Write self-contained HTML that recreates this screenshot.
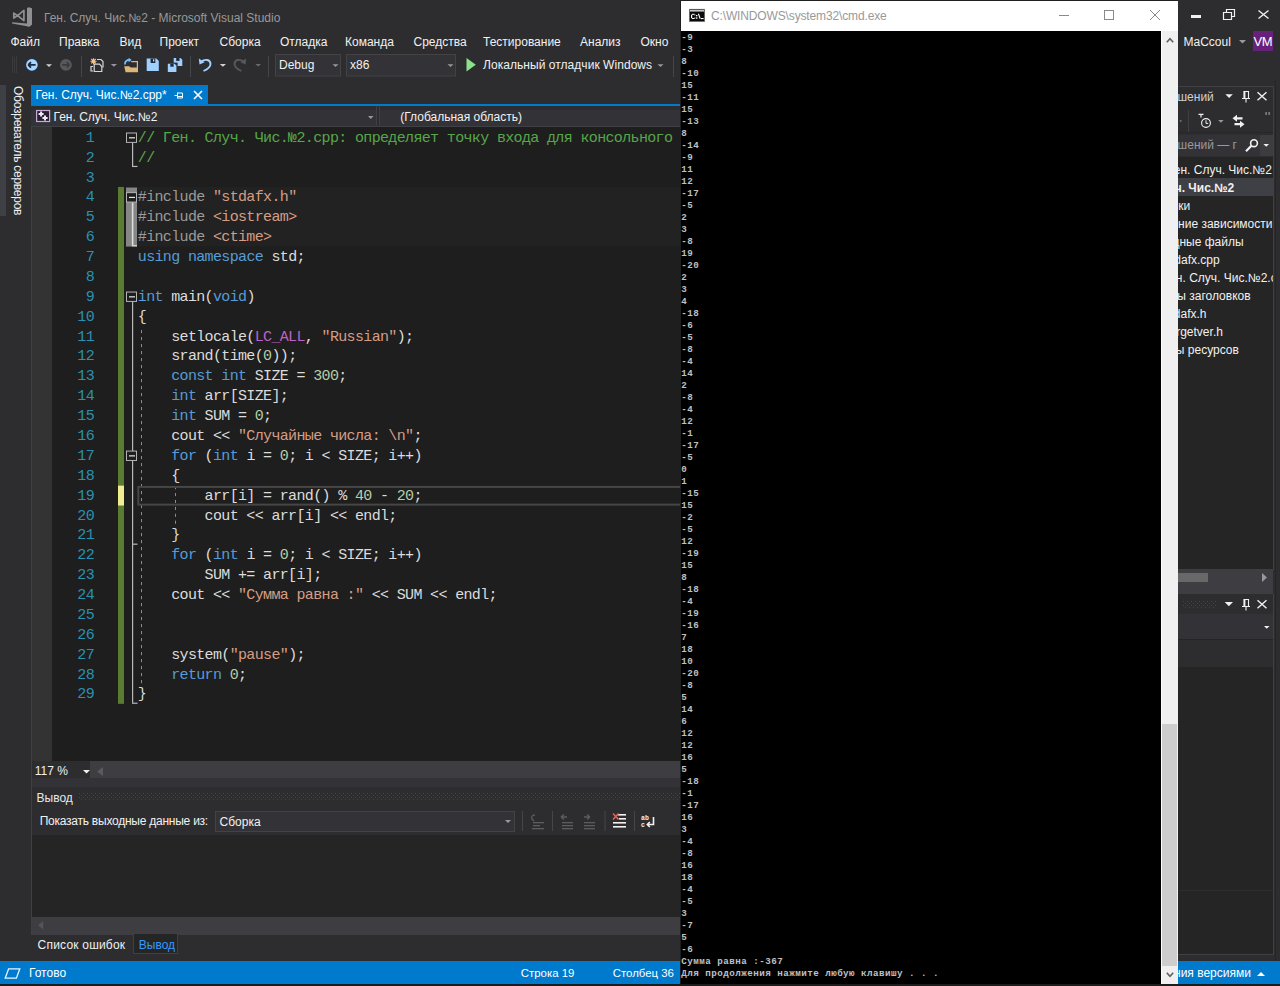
<!DOCTYPE html>
<html><head><meta charset="utf-8">
<style>
*{margin:0;padding:0;box-sizing:border-box}
html,body{width:1280px;height:986px;overflow:hidden;background:#2d2d30;font-family:"Liberation Sans",sans-serif;font-size:12px;color:#f1f1f1}
.a{position:absolute}
.t{position:absolute;white-space:pre;line-height:14px}
.mono{font-family:"Liberation Mono",monospace}
#code .ln{position:absolute;left:60px;width:34px;text-align:right;color:#2b91af}
#code .cl{position:absolute;left:137.8px;color:#dcdcdc;white-space:pre}
.cm{color:#57a64a}.pp{color:#9b9b9b}.st{color:#d69d85}.kw{color:#569cd6}.nu{color:#b5cea8}.mc{color:#bd63c5}
#cons div{height:12px;line-height:12px;white-space:pre}
svg{position:absolute;overflow:visible}
</style></head><body>
<svg style="left:0;top:0" width="40" height="30" viewBox="0 0 40 30">
<path d="M27 8 L28.8 7.2 L32 8.3 V24.6 L29.6 26.6 L27 26.2 Z" fill="#8f8f94"/>
<path d="M12 22.2 L27 23.4 L32 24.4 L29.6 26.6 L27 26.3 L12 23.4 Z" fill="#8f8f94"/>
<path d="M13.8 13.2 L17.6 15.6 L13.8 18.1 Z M23.9 10.4 V20.6 L17.6 15.6 Z" fill="none" stroke="#8f8f94" stroke-width="1.7" stroke-linejoin="round"/>
</svg>
<div class="t" style="left:44px;top:11px;color:#999999;">Ген. Случ. Чис.№2 - Microsoft Visual Studio</div>
<div class="a" style="left:1190.5px;top:15px;width:10px;height:3px;background:#f1f1f1;"></div>
<svg style="left:1223px;top:9px" width="12" height="11"><path d="M3.5 3.5 V0.5 H11.5 V7.5 H8.5 M0.5 3.5 H8.5 V10.5 H0.5 Z" fill="none" stroke="#f1f1f1" stroke-width="1.2"/></svg>
<svg style="left:1258px;top:9.5px" width="11" height="9"><path d="M0.5 0.5 L10.5 8.5 M10.5 0.5 L0.5 8.5" stroke="#f1f1f1" stroke-width="1.4"/></svg>
<div class="t" style="left:10.5px;top:34.6px;color:#f1f1f1;">Файл</div>
<div class="t" style="left:59px;top:34.6px;color:#f1f1f1;">Правка</div>
<div class="t" style="left:119.5px;top:34.6px;color:#f1f1f1;">Вид</div>
<div class="t" style="left:159.5px;top:34.6px;color:#f1f1f1;">Проект</div>
<div class="t" style="left:219.5px;top:34.6px;color:#f1f1f1;">Сборка</div>
<div class="t" style="left:280px;top:34.6px;color:#f1f1f1;">Отладка</div>
<div class="t" style="left:345px;top:34.6px;color:#f1f1f1;">Команда</div>
<div class="t" style="left:413.5px;top:34.6px;color:#f1f1f1;">Средства</div>
<div class="t" style="left:483px;top:34.6px;color:#f1f1f1;">Тестирование</div>
<div class="t" style="left:580px;top:34.6px;color:#f1f1f1;">Анализ</div>
<div class="t" style="left:640.5px;top:34.6px;color:#f1f1f1;">Окно</div>
<div class="t" style="left:1183.5px;top:35px;color:#f1f1f1;">MaCcoul</div>
<svg style="left:1239px;top:40px" width="7" height="4"><path d="M0 0H7L3.5 3.5Z" fill="#999"/></svg>
<div class="a" style="left:1252.5px;top:31px;width:20.5px;height:20px;background:#68217a;"></div>
<div class="t" style="left:1253.5px;top:35px;color:#ffffff;font-size:13px;letter-spacing:-0.3px">VM</div>
<svg style="left:0;top:52px" width="680" height="28" viewBox="0 52 680 28">
<!-- gripper -->
<g fill="#3a3a3e"><rect x="12" y="56" width="1" height="17"/><rect x="14" y="57" width="1" height="16"/><rect x="16" y="56" width="1" height="17"/></g>
<!-- back -->
<circle cx="31.9" cy="64.9" r="6.6" fill="#1a3350"/>
<circle cx="31.9" cy="64.9" r="5.8" fill="#a9d5ff"/>
<path d="M28.2 64.9 H35.6 M28.2 64.9 L31 62.1 M28.2 64.9 L31 67.7" stroke="#1b2a3e" stroke-width="1.8" fill="none"/>
<path d="M46 64.3 H52 L49 67 Z" fill="#d2d2d2"/>
<!-- forward -->
<circle cx="65.9" cy="64.9" r="5.9" fill="#58585c"/>
<path d="M69.4 64.9 H62.2 M69.4 64.9 L66.8 62.3 M69.4 64.9 L66.8 67.5" stroke="#3a3a3e" stroke-width="1.6" fill="none"/>
<rect x="81" y="56" width="1" height="21" fill="#46464a"/>
<!-- new project -->
<g stroke="#f2c48a" stroke-width="1.1"><path d="M90.5 61.2 H96.5 M93.5 58.2 V64.2 M91.3 59 L95.7 63.4 M95.7 59 L91.3 63.4"/></g>
<circle cx="93.5" cy="61.2" r="1.3" fill="#f2c48a"/>
<path d="M97 59.5 H101 L103 61.5 V67.5" fill="none" stroke="#d6d6d6" stroke-width="1.2"/>
<path d="M94.2 64.2 H99.5 L101.8 66.5 V71.5 H94.2 Z" fill="#2d2d30" stroke="#d6d6d6" stroke-width="1.2"/>
<path d="M93 66.5 H91 V71 H93" fill="none" stroke="#d6d6d6" stroke-width="1.2"/>
<path d="M110.8 64.1 H117 L113.9 66.8 Z" fill="#9a94a0"/>
<!-- open -->
<path d="M131.2 61.6 H137.4 V72" fill="none" stroke="#dcb67a" stroke-width="1.2"/>
<path d="M124.2 66.2 H129.2 L130.6 67.4 H137.9 V72.2 H125.6 Z" fill="#dcb67a"/>
<path d="M124.9 64.6 C124.9 61.4 126.6 59.9 129.6 59.9" fill="none" stroke="#75beff" stroke-width="1.7"/>
<path d="M128.6 57.8 L131.7 60 L128.6 62.2 Z" fill="#75beff"/>
<!-- save -->
<path d="M146.7 58.6 H156.5 L158.8 60.9 V71.1 H146.7 Z" fill="#9fd0ff"/>
<rect x="150.6" y="58.6" width="4.7" height="4.4" fill="#1e2a38"/>
<rect x="153" y="59.4" width="1.2" height="2" fill="#e8e8e8"/>
<!-- save all -->
<path d="M173.7 57.9 H180.5 L182.3 59.7 V66 H173.7 Z" fill="#9fd0ff"/>
<rect x="176.2" y="57.9" width="3.3" height="3" fill="#1e2a38"/>
<rect x="172.6" y="62.6" width="5" height="4.6" fill="#2d2d30"/>
<path d="M167.8 63.7 H174.6 L176.4 65.5 V72 H167.8 Z" fill="#9fd0ff"/>
<rect x="170.3" y="63.7" width="3.3" height="3" fill="#1e2a38"/>
<rect x="190" y="56" width="1" height="21" fill="#46464a"/>
<!-- undo -->
<path d="M201 62 C205 58.5 210.5 59.5 210.5 64 C210.5 67 207 69.5 203.5 71" fill="none" stroke="#9fd0ff" stroke-width="1.9"/>
<path d="M198.8 58.5 L199.5 64.6 L204.6 62.2 Z" fill="#9fd0ff"/>
<path d="M219.8 64 H226 L222.9 66.7 Z" fill="#d2d2d2"/>
<!-- redo (disabled) -->
<path d="M244 62 C240 58.5 234.5 59.5 234.5 64 C234.5 67 238 69.5 241.5 71" fill="none" stroke="#58585c" stroke-width="1.9"/>
<path d="M246.2 58.5 L245.5 64.6 L240.4 62.2 Z" fill="#58585c"/>
<path d="M255.4 64 H261 L258.2 66.5 Z" fill="#6a6a6e"/>
<rect x="268" y="56" width="1" height="21" fill="#46464a"/>
<!-- Debug combo -->
<rect x="275.5" y="54.5" width="65" height="21.5" fill="#333337" stroke="#434346"/>
<path d="M332.5 64.3 H338.5 L335.5 67 Z" fill="#999"/>
<rect x="346.5" y="54.5" width="109" height="21.5" fill="#333337" stroke="#434346"/>
<path d="M447.5 64.3 H453.5 L450.5 67 Z" fill="#999"/>
<!-- play -->
<path d="M466.5 58 L475.8 64.8 L466.5 71.6 Z" fill="#8ae28a"/>
<path d="M657.5 64.3 H663.5 L660.5 67 Z" fill="#999"/>
<rect x="673" y="56" width="1" height="21" fill="#46464a"/>
</svg>
<div class="t" style="left:279px;top:58px">Debug</div>
<div class="t" style="left:350px;top:58px">x86</div>
<div class="t" style="left:483px;top:58px;letter-spacing:0.05px">Локальный отладчик Windows</div>

<div class="a" style="left:0px;top:85px;width:6px;height:131px;background:#3f3f46;"></div>
<div class="t" style="left:10.5px;top:86px;width:14px;height:134px;color:#f1f1f1;writing-mode:vertical-rl;line-height:14px;letter-spacing:-0.25px">Обозреватель серверов</div>
<div class="a" style="left:31px;top:85px;width:177px;height:20px;background:#007acc;"></div>
<div class="a" style="left:31px;top:104px;width:1150px;height:2px;background:#007acc;"></div>
<div class="t" style="left:35.5px;top:88px;color:#ffffff;">Ген. Случ. Чис.№2.cpp*</div>
<svg style="left:174px;top:91px" width="11" height="9"><path d="M0.5 4.5 H3.5 M3.5 1.5 V7.5 M3.5 2 H8.5 V7 H3.5 M4 5.5 H8.5" fill="none" stroke="#ffffff" stroke-width="1"/></svg>
<svg style="left:193px;top:90px" width="10" height="10"><path d="M1 1 L9 9 M9 1 L1 9" stroke="#ffffff" stroke-width="1.6"/></svg>
<div class="a" style="left:31px;top:106px;width:1150px;height:21.4px;background:#2d2d30;"></div>
<div class="a" style="left:31px;top:110px;width:345px;height:16px;background:#333337;"></div>
<div class="a" style="left:379.4px;top:110px;width:800px;height:16px;background:#333337;"></div>
<div class="a" style="left:31px;top:126px;width:1150px;height:1.4px;background:#3f3f46;"></div>
<div class="a" style="left:375.6px;top:106px;width:1px;height:21px;background:#3f3f46;"></div>
<div class="a" style="left:379.4px;top:106px;width:1px;height:21px;background:#3f3f46;"></div>
<svg style="left:0;top:0" width="60" height="130" viewBox="0 0 60 130"><rect x="36.6" y="110.5" width="13" height="11" fill="#2a1d33" stroke="#c4acd6" stroke-width="1.2"/><path d="M38.6 113 H43.6 V115 H38.6Z M40.1 111.5 H42.1 V116.5 H40.1Z M42.4 116.9 H47.6 V118.9 H42.4Z M44 115.4 H46 V120.5 H44Z" fill="#f0eaf4"/></svg>
<div class="t" style="left:53.5px;top:110px;color:#f1f1f1;">Ген. Случ. Чис.№2</div>
<svg style="left:367.5px;top:115.8px" width="6" height="4"><path d="M0 0H5.5L2.75 3Z" fill="#999"/></svg>
<div class="t" style="left:400.3px;top:110px;color:#f1f1f1;">(Глобальная область)</div>
<div class="a" style="left:31px;top:127.4px;width:1150px;height:634px;background:#1e1e1e;"></div>
<div class="a" style="left:32px;top:127px;width:20px;height:634.3px;background:#333333;"></div>
<div class="a" style="left:31px;top:127.4px;width:1px;height:634px;background:#3f3f46;"></div>
<svg id="deco" style="left:0;top:0" width="1280" height="986"><rect x="137" y="186.94" width="1044" height="59.64" fill="#222222"/><rect x="118" y="186.94" width="6" height="516.88" fill="#5b7a32"/><rect x="118" y="485.64" width="6" height="19.88" fill="#efef91"/><rect x="126" y="187.54" width="11" height="59.04" fill="#868686"/><rect x="132" y="142.80" width="1.2" height="23.26" fill="#b8b8b8"/><rect x="132" y="165.86" width="5.5" height="1.2" fill="#b8b8b8"/><rect x="131.8" y="202.44" width="1.6" height="43.14" fill="#dcdcdc"/><rect x="132" y="245.18" width="5" height="1.2" fill="#dcdcdc"/><rect x="132" y="301.84" width="1.2" height="400.98" fill="#b8b8b8"/><rect x="132" y="702.62" width="5.5" height="1.2" fill="#b8b8b8"/><rect x="132" y="543.58" width="5.5" height="1.2" fill="#b8b8b8"/><rect x="126.5" y="133.00" width="10" height="9.4" fill="#1e1e1e" stroke="#b4b4b4" stroke-width="1"/><rect x="129" y="137.20" width="6" height="1.2" fill="#e8e8e8"/><rect x="126.5" y="292.04" width="10" height="9.4" fill="#1e1e1e" stroke="#b4b4b4" stroke-width="1"/><rect x="129" y="296.24" width="6" height="1.2" fill="#e8e8e8"/><rect x="126.5" y="451.08" width="10" height="9.4" fill="#1e1e1e" stroke="#b4b4b4" stroke-width="1"/><rect x="129" y="455.28" width="6" height="1.2" fill="#e8e8e8"/><rect x="126.5" y="192.64" width="10" height="9.4" fill="#1e1e1e" stroke="#b4b4b4" stroke-width="1"/><rect x="129" y="196.84" width="6" height="1.2" fill="#e8e8e8"/><line x1="141.5" y1="330" x2="141.5" y2="684.94" stroke="#8c8c8c" stroke-width="1" stroke-dasharray="3.2,3.8"/><line x1="175.5" y1="486.14" x2="175.5" y2="524.90" stroke="#8c8c8c" stroke-width="1" stroke-dasharray="3.1,3.8"/><rect x="138.3" y="486.94" width="560" height="17.68" fill="none" stroke="#464646" stroke-width="2"/></svg>
<div id="code" class="a mono" style="left:0;top:0;font-size:15px;letter-spacing:-0.65px">
<div class="ln" style="top:128.80px;line-height:19.88px">1</div>
<div class="cl" style="top:128.80px;line-height:19.88px"><span class="cm">// Ген. Случ. Чис.№2.cpp: определяет точку входа для консольного приложения.</span></div>
<div class="ln" style="top:148.68px;line-height:19.88px">2</div>
<div class="cl" style="top:148.68px;line-height:19.88px"><span class="cm">//</span></div>
<div class="ln" style="top:168.56px;line-height:19.88px">3</div>
<div class="ln" style="top:188.44px;line-height:19.88px">4</div>
<div class="cl" style="top:188.44px;line-height:19.88px"><span class="pp">#include</span> <span class="st">"stdafx.h"</span></div>
<div class="ln" style="top:208.32px;line-height:19.88px">5</div>
<div class="cl" style="top:208.32px;line-height:19.88px"><span class="pp">#include</span> <span class="st">&lt;iostream&gt;</span></div>
<div class="ln" style="top:228.20px;line-height:19.88px">6</div>
<div class="cl" style="top:228.20px;line-height:19.88px"><span class="pp">#include</span> <span class="st">&lt;ctime&gt;</span></div>
<div class="ln" style="top:248.08px;line-height:19.88px">7</div>
<div class="cl" style="top:248.08px;line-height:19.88px"><span class="kw">using</span> <span class="kw">namespace</span> std;</div>
<div class="ln" style="top:267.96px;line-height:19.88px">8</div>
<div class="ln" style="top:287.84px;line-height:19.88px">9</div>
<div class="cl" style="top:287.84px;line-height:19.88px"><span class="kw">int</span> main(<span class="kw">void</span>)</div>
<div class="ln" style="top:307.72px;line-height:19.88px">10</div>
<div class="cl" style="top:307.72px;line-height:19.88px">{</div>
<div class="ln" style="top:327.60px;line-height:19.88px">11</div>
<div class="cl" style="top:327.60px;line-height:19.88px">    setlocale(<span class="mc">LC_ALL</span>, <span class="st">"Russian"</span>);</div>
<div class="ln" style="top:347.48px;line-height:19.88px">12</div>
<div class="cl" style="top:347.48px;line-height:19.88px">    srand(time(<span class="nu">0</span>));</div>
<div class="ln" style="top:367.36px;line-height:19.88px">13</div>
<div class="cl" style="top:367.36px;line-height:19.88px">    <span class="kw">const</span> <span class="kw">int</span> SIZE = <span class="nu">300</span>;</div>
<div class="ln" style="top:387.24px;line-height:19.88px">14</div>
<div class="cl" style="top:387.24px;line-height:19.88px">    <span class="kw">int</span> arr[SIZE];</div>
<div class="ln" style="top:407.12px;line-height:19.88px">15</div>
<div class="cl" style="top:407.12px;line-height:19.88px">    <span class="kw">int</span> SUM = <span class="nu">0</span>;</div>
<div class="ln" style="top:427.00px;line-height:19.88px">16</div>
<div class="cl" style="top:427.00px;line-height:19.88px">    cout &lt;&lt; <span class="st">"Случайные числа: \n"</span>;</div>
<div class="ln" style="top:446.88px;line-height:19.88px">17</div>
<div class="cl" style="top:446.88px;line-height:19.88px">    <span class="kw">for</span> (<span class="kw">int</span> i = <span class="nu">0</span>; i &lt; SIZE; i++)</div>
<div class="ln" style="top:466.76px;line-height:19.88px">18</div>
<div class="cl" style="top:466.76px;line-height:19.88px">    {</div>
<div class="ln" style="top:486.64px;line-height:19.88px">19</div>
<div class="cl" style="top:486.64px;line-height:19.88px">        arr[i] = rand() % <span class="nu">40</span> - <span class="nu">20</span>;</div>
<div class="ln" style="top:506.52px;line-height:19.88px">20</div>
<div class="cl" style="top:506.52px;line-height:19.88px">        cout &lt;&lt; arr[i] &lt;&lt; endl;</div>
<div class="ln" style="top:526.40px;line-height:19.88px">21</div>
<div class="cl" style="top:526.40px;line-height:19.88px">    }</div>
<div class="ln" style="top:546.28px;line-height:19.88px">22</div>
<div class="cl" style="top:546.28px;line-height:19.88px">    <span class="kw">for</span> (<span class="kw">int</span> i = <span class="nu">0</span>; i &lt; SIZE; i++)</div>
<div class="ln" style="top:566.16px;line-height:19.88px">23</div>
<div class="cl" style="top:566.16px;line-height:19.88px">        SUM += arr[i];</div>
<div class="ln" style="top:586.04px;line-height:19.88px">24</div>
<div class="cl" style="top:586.04px;line-height:19.88px">    cout &lt;&lt; <span class="st">"Сумма равна :"</span> &lt;&lt; SUM &lt;&lt; endl;</div>
<div class="ln" style="top:605.92px;line-height:19.88px">25</div>
<div class="ln" style="top:625.80px;line-height:19.88px">26</div>
<div class="ln" style="top:645.68px;line-height:19.88px">27</div>
<div class="cl" style="top:645.68px;line-height:19.88px">    system(<span class="st">"pause"</span>);</div>
<div class="ln" style="top:665.56px;line-height:19.88px">28</div>
<div class="cl" style="top:665.56px;line-height:19.88px">    <span class="kw">return</span> <span class="nu">0</span>;</div>
<div class="ln" style="top:685.44px;line-height:19.88px">29</div>
<div class="cl" style="top:685.44px;line-height:19.88px">}</div>
</div>
<div class="a" style="left:31px;top:761.3px;width:1150px;height:25px;background:#3e3e42;"></div>
<div class="a" style="left:31px;top:778px;width:1150px;height:8.5px;background:#333337;"></div>
<div class="a" style="left:32px;top:761.3px;width:58.3px;height:16.5px;background:#2d2d30;"></div>
<div class="t" style="left:34.8px;top:763.7px;color:#f1f1f1;">117 %</div>
<svg style="left:82.6px;top:769.8px" width="7" height="4"><path d="M0 0H7L3.5 3.5Z" fill="#f1f1f1"/></svg>
<svg style="left:97.4px;top:767px" width="6" height="9"><path d="M6 0V9L0 4.5Z" fill="#5a5a5e"/></svg>
<div class="a" style="left:31px;top:786.5px;width:1150px;height:48px;background:#2d2d30;"></div>
<div class="t" style="left:36.6px;top:791.2px;color:#e8e8e8;">Вывод</div>
<svg style="left:79px;top:792.5px" width="1100" height="8"><defs><pattern id="grip" width="4" height="4" patternUnits="userSpaceOnUse"><rect x="0" y="0" width="1" height="1" fill="#46464a"/><rect x="2" y="2" width="1" height="1" fill="#46464a"/></pattern></defs><rect x="0" y="0" width="1100" height="8" fill="url(#grip)"/></svg>
<div class="t" style="left:39.7px;top:814.3px;color:#f1f1f1;letter-spacing:-0.24px">Показать выходные данные из:</div>
<div class="a" style="left:215px;top:811px;width:300px;height:20.5px;background:#333337;border:1px solid #434346"></div>
<div class="t" style="left:219.5px;top:815px;color:#f1f1f1;">Сборка</div>
<svg style="left:505.3px;top:820px" width="6" height="3"><path d="M0 0H6L3 3Z" fill="#999"/></svg>
<svg style="left:0;top:806px" width="680" height="30" viewBox="0 806 680 30">
<g fill="#46464a"><rect x="522" y="811" width="1" height="20"/><rect x="552" y="811" width="1" height="20"/><rect x="604.5" y="811" width="1" height="20"/><rect x="634" y="811" width="1" height="20"/></g>
<g fill="#5c5c60">
<rect x="533" y="822" width="11" height="1.3"/><rect x="533" y="825" width="7" height="1.3"/><rect x="532" y="828" width="12" height="1.3"/>
<path d="M535 815 C532 815 531 817 532 819 L534 821" fill="none" stroke="#5c5c60" stroke-width="1.3"/>
<rect x="562" y="822" width="11" height="1.3"/><rect x="562" y="825" width="11" height="1.3"/><rect x="562" y="828" width="11" height="1.3"/>
<path d="M561 817 H567 M561 817 L564 814.5 M561 817 L564 819.5" stroke="#5c5c60" stroke-width="1.3" fill="none"/>
<rect x="584" y="822" width="11" height="1.3"/><rect x="584" y="825" width="11" height="1.3"/><rect x="584" y="828" width="11" height="1.3"/>
<path d="M590 817 H584 M590 817 L587 814.5 M590 817 L587 819.5" stroke="#5c5c60" stroke-width="1.3" fill="none"/>
</g>
<g fill="#f1f1f1"><rect x="618" y="814" width="8" height="1.6"/><rect x="619" y="818" width="7" height="1.6"/><rect x="613" y="822" width="13" height="1.6"/><rect x="613" y="826" width="13" height="1.6"/></g>
<path d="M613 813.5 L618.5 819.5 M618.5 813.5 L613 819.5" stroke="#e8655a" stroke-width="1.5"/>
<text x="641" y="820" font-family="Liberation Mono" font-size="6.5" font-weight="bold" fill="#f1f1f1">ab</text>
<text x="641" y="827" font-family="Liberation Mono" font-size="6.5" font-weight="bold" fill="#f1f1f1">c</text>
<path d="M653.5 817 V824.5 H647.5 M649.8 822 L647.3 824.5 L649.8 827" fill="none" stroke="#f1f1f1" stroke-width="1.6"/>
</svg>

<div class="a" style="left:31px;top:834.5px;width:1150px;height:82.3px;background:#252526;"></div>
<div class="a" style="left:31px;top:916.75px;width:1150px;height:18px;background:#3e3e42;"></div>
<svg style="left:37.6px;top:921.3px" width="5.2" height="8.4"><path d="M5.2 0V8.4L0 4.2Z" fill="#555558"/></svg>
<div class="a" style="left:30.5px;top:761px;width:1.2px;height:174px;background:#3f3f46;"></div>
<div class="t" style="left:37.6px;top:937.7px;color:#f1f1f1;letter-spacing:0.2px">Список ошибок</div>
<div class="a" style="left:132.5px;top:933.2px;width:45px;height:21px;background:#252526;border:1px solid #3f3f46"></div>
<div class="t" style="left:138.8px;top:937.7px;color:#3399ff;">Вывод</div>
<div class="a" style="left:1178px;top:52px;width:102px;height:909px;background:#2d2d30;"></div>
<div class="a" style="left:1100px;top:85.5px;width:174px;height:1px;background:#3f3f46;"></div>
<div class="a" style="left:1272.7px;top:85.5px;width:1px;height:484px;background:#3f3f46;"></div>
<div class="t" style="right:66.20px;top:89.70px;color:#d0d0d0;">Обозреватель решений</div>
<svg style="left:1178px;top:85px" width="102" height="80" viewBox="1178 85 102 80"><path d="M1225.4 94.2 H1232.8 L1229.1 97.9 Z" fill="#f1f1f1"/><path d="M1244 91.5 H1248.5 V98.5 M1242 98.5 H1250 M1246 98.5 V102.5" fill="none" stroke="#f1f1f1" stroke-width="1.1"/><rect x="1243.4" y="91" width="2" height="7.5" fill="#f1f1f1"/><path d="M1257.5 92.3 L1266.5 100.3 M1266.5 92.3 L1257.5 100.3" stroke="#f1f1f1" stroke-width="1.4"/><rect x="1188" y="110" width="1" height="22" fill="#3f3f46"/><path d="M1179.5 120.5 H1182 L1180.7 122 Z" fill="#999"/><path d="M1198.5 114.3 H1203.5 M1201 114.3 V117.5" stroke="#f1f1f1" stroke-width="1.2" fill="none"/><circle cx="1206" cy="123" r="4.4" fill="none" stroke="#f1f1f1" stroke-width="1.1"/><path d="M1206 120.3 V123.4 H1208.2" fill="none" stroke="#f1f1f1" stroke-width="1"/><path d="M1218.2 120 H1223.6 L1220.9 122.8 Z" fill="#999"/><path d="M1242.5 118.3 H1236.5 M1234.5 124.2 H1240.5" stroke="#f1f1f1" stroke-width="2.2" fill="none"/><path d="M1232.5 118.3 L1237 114.8 V121.8 Z M1244.5 124.2 L1240 120.7 V127.7 Z" fill="#f1f1f1"/><rect x="1265.5" y="112" width="1.2" height="3" fill="#999"/><rect x="1268.5" y="112" width="1.2" height="3" fill="#999"/></svg>
<div class="a" style="left:1100px;top:131.5px;width:173px;height:1px;background:#28282b;"></div>
<div class="a" style="left:1100px;top:135px;width:173px;height:21px;background:#333337;"></div>
<div class="a" style="left:1260px;top:135px;width:13px;height:21px;background:#3c3c41;"></div>
<div class="t" style="right:43.00px;top:138.40px;color:#999999;">Поиск в обозревателе решений — г</div>
<svg style="left:1244px;top:138px" width="28" height="16" viewBox="1244 138 28 16"><circle cx="1254" cy="143.2" r="3.4" fill="none" stroke="#f1f1f1" stroke-width="1.6"/><path d="M1251.4 145.8 L1246 151.3" stroke="#f1f1f1" stroke-width="2.2"/><path d="M1263.4 144 H1269 L1266.2 146.8 Z" fill="#f1f1f1"/></svg>
<div class="a" style="left:1100px;top:156.5px;width:172.7px;height:412.5px;background:#252526;"></div>
<div class="a" style="left:1100px;top:155.5px;width:173px;height:1.2px;background:#2d2d30;"></div>
<div class="a" style="left:1100px;top:177.7px;width:172.7px;height:18.8px;background:#3f3f46;"></div>
<div class="a" style="left:1100px;top:156px;width:172.7px;height:412px;overflow:hidden">
<div class="t" style="right:0.80px;top:6.90px;color:#f1f1f1;">Решение &quot;Ген. Случ. Чис.№2</div>
<div class="t" style="right:38.50px;top:24.50px;color:#f1f1f1;font-weight:bold;">Ген. Случ. Чис.№2</div>
<div class="t" style="right:82.40px;top:42.60px;color:#f1f1f1;">Ссылки</div>
<div class="t" style="right:0.20px;top:60.60px;color:#f1f1f1;">Внешние зависимости</div>
<div class="t" style="right:29.10px;top:78.60px;color:#f1f1f1;">Исходные файлы</div>
<div class="t" style="right:53.00px;top:96.60px;color:#f1f1f1;">stdafx.cpp</div>
<div class="t" style="right:-17.30px;top:114.60px;color:#f1f1f1;">Ген. Случ. Чис.№2.cpp</div>
<div class="t" style="right:22.10px;top:132.60px;color:#f1f1f1;">Файлы заголовков</div>
<div class="t" style="right:66.20px;top:150.60px;color:#f1f1f1;">stdafx.h</div>
<div class="t" style="right:49.80px;top:168.60px;color:#f1f1f1;">targetver.h</div>
<div class="t" style="right:33.80px;top:186.60px;color:#f1f1f1;">Файлы ресурсов</div>
</div>
<div class="a" style="left:1100px;top:569px;width:173px;height:25px;background:#3e3e42;"></div>
<div class="a" style="left:1177px;top:572.9px;width:31px;height:9px;background:#686868;"></div>
<svg style="left:1262px;top:573px" width="5" height="9"><path d="M0 0V9L5 4.5Z" fill="#999"/></svg>
<div class="a" style="left:1100px;top:594px;width:173px;height:20px;background:#2d2d30;"></div>
<div class="a" style="left:1100px;top:614px;width:173px;height:24.7px;background:#333337;"></div>
<svg style="left:1183px;top:600.5px" width="33" height="8"><rect x="0" y="0" width="33" height="8" fill="url(#grip)"/></svg>
<svg style="left:1178px;top:594px" width="102" height="40" viewBox="1178 594 102 40"><path d="M1224.7 601.9 H1233 L1228.85 606.2 Z" fill="#f1f1f1"/><path d="M1244 599.5 H1248.5 V606.5 M1242 606.5 H1250 M1246 606.5 V610.5" fill="none" stroke="#f1f1f1" stroke-width="1.1"/><rect x="1243.4" y="599" width="2" height="7.5" fill="#f1f1f1"/><path d="M1257.5 600.3 L1266.5 608.3 M1266.5 600.3 L1257.5 608.3" stroke="#f1f1f1" stroke-width="1.4"/><path d="M1264 626 H1269.5 L1266.75 628.8 Z" fill="#f1f1f1"/></svg>
<div class="a" style="left:1100px;top:638.7px;width:173px;height:315.5px;background:#252526;"></div>
<div class="a" style="left:1100px;top:640px;width:172.7px;height:26.5px;background:#2d2d30;"></div>
<div class="a" style="left:1100px;top:890px;width:172.7px;height:1px;background:#2d2d30;"></div>
<div class="a" style="left:1100px;top:954.2px;width:174px;height:1px;background:#3f3f46;"></div>
<div class="a" style="left:1272.7px;top:594px;width:1px;height:361px;background:#3f3f46;"></div>
<div class="a" style="left:1274.5px;top:80px;width:1px;height:881px;background:#252526;"></div>
<div class="a" style="left:0px;top:961px;width:1280px;height:22.7px;background:#007acc;"></div>
<div class="a" style="left:0px;top:983.7px;width:1280px;height:2.3px;background:#1c1c1c;"></div>
<svg style="left:4px;top:968px" width="17" height="11"><path d="M4.6 0.8 H15.8 L12.4 10.2 H1.2 Z" fill="none" stroke="#e8f4ff" stroke-width="1.3"/></svg>
<div class="t" style="left:29px;top:966px;color:#ffffff;">Готово</div>
<div class="t" style="left:520.8px;top:965.7px;color:#ffffff;font-size:11.4px">Строка 19</div>
<div class="t" style="left:612.8px;top:965.7px;color:#ffffff;font-size:11.4px">Столбец 36</div>
<div class="t" style="right:29.1px;top:965.9px;color:#ffffff">Добавить в систему управления версиями</div>
<svg style="left:1257px;top:971.5px" width="8" height="4"><path d="M0 4H8L4 0Z" fill="#ffffff"/></svg>
<div class="a" style="left:680px;top:0;width:498px;height:983.5px;background:#000"></div>
<div class="a" style="left:679.5px;top:0;width:1px;height:983.5px;background:#1e1e1e"></div>
<div class="a" style="left:680px;top:0;width:498px;height:1px;background:#202020"></div>
<div class="a" style="left:681px;top:1px;width:497px;height:30px;background:#ffffff"></div>
<svg style="left:0;top:0" width="720" height="30" viewBox="0 0 720 30"><rect x="689.3" y="9.2" width="15.4" height="12.4" fill="#0a0a0a" stroke="#777" stroke-width="0.6"/><rect x="690" y="10" width="14" height="1.6" fill="#c8c8c8"/><g fill="#ffffff"><rect x="691" y="14.6" width="1.2" height="3.6"/><rect x="692" y="13.8" width="2.6" height="1"/><rect x="692" y="18" width="2.6" height="1"/><rect x="694.5" y="14.5" width="0.9" height="0.9"/><rect x="694.5" y="17.4" width="0.9" height="0.9"/><rect x="696" y="15" width="1.4" height="1.3"/><rect x="696" y="17.4" width="1.4" height="1.3"/><rect x="701" y="18" width="2.6" height="1.1"/></g><path d="M698.4 13.8 L700.2 18.8" stroke="#fff" stroke-width="1.1"/></svg>
<div class="t" style="left:711px;top:9px;color:#999999;letter-spacing:-0.14px">C:\WINDOWS\system32\cmd.exe</div>
<div class="a" style="left:1059px;top:15px;width:10px;height:1px;background:#8a8a8a"></div>
<div class="a" style="left:1104px;top:10px;width:10px;height:10px;border:1px solid #8a8a8a"></div>
<svg style="left:1150px;top:10px" width="10" height="10"><path d="M0 0L10 10M10 0L0 10" stroke="#8a8a8a" stroke-width="1"/></svg>
<div class="a" style="left:1161px;top:31px;width:17px;height:952.5px;background:#f0f0f0;border-left:1px solid #ffffff"></div>
<div class="a" style="left:1162px;top:724px;width:15px;height:241.5px;background:#cdcdcd"></div>
<svg style="left:1165.5px;top:37px" width="8" height="6"><path d="M0.8 5.2 L4 1.6 L7.2 5.2" fill="none" stroke="#606060" stroke-width="1.6"/></svg>
<svg style="left:1166px;top:972px" width="8" height="6"><path d="M0.8 0.8 L4 4.4 L7.2 0.8" fill="none" stroke="#606060" stroke-width="1.6"/></svg>
<div id="cons" class="a mono" style="left:681.3px;top:32.0px;font-size:9.2px;letter-spacing:0.48px;font-weight:bold;color:#c0c0c0">
<div>-9</div>
<div>-3</div>
<div>8</div>
<div>-10</div>
<div>15</div>
<div>-11</div>
<div>15</div>
<div>-13</div>
<div>8</div>
<div>-14</div>
<div>-9</div>
<div>11</div>
<div>12</div>
<div>-17</div>
<div>-5</div>
<div>2</div>
<div>3</div>
<div>-8</div>
<div>19</div>
<div>-20</div>
<div>2</div>
<div>3</div>
<div>4</div>
<div>-18</div>
<div>-6</div>
<div>-5</div>
<div>-8</div>
<div>-4</div>
<div>14</div>
<div>2</div>
<div>-8</div>
<div>-4</div>
<div>12</div>
<div>-1</div>
<div>-17</div>
<div>-5</div>
<div>0</div>
<div>1</div>
<div>-15</div>
<div>15</div>
<div>-2</div>
<div>-5</div>
<div>12</div>
<div>-19</div>
<div>15</div>
<div>8</div>
<div>-18</div>
<div>-4</div>
<div>-19</div>
<div>-16</div>
<div>7</div>
<div>18</div>
<div>10</div>
<div>-20</div>
<div>-8</div>
<div>5</div>
<div>14</div>
<div>6</div>
<div>12</div>
<div>12</div>
<div>16</div>
<div>5</div>
<div>-18</div>
<div>-1</div>
<div>-17</div>
<div>16</div>
<div>3</div>
<div>-4</div>
<div>-8</div>
<div>16</div>
<div>18</div>
<div>-4</div>
<div>-5</div>
<div>3</div>
<div>-7</div>
<div>5</div>
<div>-6</div>
<div>Сумма равна :-367</div>
<div>Для продолжения нажмите любую клавишу . . .</div>
</div>
</body></html>
